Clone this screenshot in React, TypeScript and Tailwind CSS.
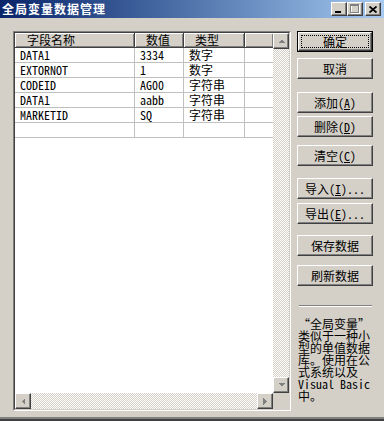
import React from "react";

const F = "font-['Noto_Sans_Mono_CJK_SC','Noto_Sans_CJK_SC',monospace]";

const BEVEL =
  "bg-[#d4d0c8] border border-t-white border-l-white border-b-[#404040] border-r-[#404040] shadow-[inset_-1px_-1px_#808080,inset_1px_1px_#d4d0c8]";

function Arrow({ dir }: { dir: "up" | "down" | "left" | "right" }) {
  const pts =
    dir === "up"
      ? "0,4 7,4 3.5,0.5"
      : dir === "down"
      ? "0,0 7,0 3.5,3.5"
      : dir === "left"
      ? "4,0 4,7 0.5,3.5"
      : "0,0 0,7 3.5,3.5";
  const w = dir === "up" || dir === "down" ? 7 : 4;
  const h = dir === "up" || dir === "down" ? 4 : 7;
  return (
    <svg width={w} height={h} viewBox={`0 0 ${w} ${h}`} shapeRendering="crispEdges">
      <polygon points={pts} fill="#808080" />
    </svg>
  );
}

function SBtn({ dir, className = "" }: { dir: "up" | "down" | "left" | "right"; className?: string }) {
  return (
    <div className={`${BEVEL} w-[16px] h-[16px] shrink-0 flex items-center justify-center ${className}`}>
      <Arrow dir={dir} />
    </div>
  );
}

const CHECK =
  "bg-[repeating-conic-gradient(#d4d0c8_0%_25%,#ffffff_0%_50%)] bg-size-[2px_2px]";

function Btn({
  children,
  mt = 0,
  isDefault = false,
}: {
  children: React.ReactNode;
  mt?: number;
  isDefault?: boolean;
}) {
  const label = (
    <span className="text-[12px] leading-[12px] text-black whitespace-nowrap">{children}</span>
  );
  if (isDefault) {
    return (
      <div className="w-[76px] h-[21px] border border-black shrink-0" style={{ marginTop: mt }}>
        <div className={`${BEVEL} w-full h-full relative flex items-center justify-center`}>
          <div className="absolute inset-[2px] border border-dotted border-black" />
          {label}
        </div>
      </div>
    );
  }
  return (
    <div
      className={`${BEVEL} w-[76px] h-[21px] shrink-0 flex items-center justify-center`}
      style={{ marginTop: mt }}
    >
      {label}
    </div>
  );
}

const rows: [string, string, string][] = [
  ["DATA1", "3334", "数字"],
  ["EXTORNOT", "1", "数字"],
  ["CODEID", "AG00", "字符串"],
  ["DATA1", "aabb", "字符串"],
  ["MARKETID", "SQ", "字符串"],
  ["", "", ""],
];

const HEAD =
  "h-[15px] shrink-0 bg-[#d4d0c8] border-r border-b border-r-[#404040] border-b-[#404040] shadow-[inset_1px_1px_#ffffff,inset_-1px_-1px_#808080] text-[12px] leading-[13px] text-black";

function CapBtn({ children, className = "" }: { children: React.ReactNode; className?: string }) {
  return (
    <div className={`${BEVEL} w-[16px] h-[14px] flex items-center justify-center ${className}`}>
      {children}
    </div>
  );
}

export default function App() {
  return (
    <div className={`w-[384px] h-[421px] flex flex-col bg-[#d4d0c8] overflow-hidden ${F} text-black`}>
      {/* Title bar */}
      <div className="h-[18px] shrink-0 flex items-center bg-linear-to-r from-[#0a246a] to-[#a6caf0]">
        <span className="pl-[2px] text-white text-[12px] font-bold tracking-[1px] leading-[18px] font-['Noto_Sans_CJK_SC',sans-serif]">
          全局变量数据管理
        </span>
        <div className="ml-auto flex items-center pr-[3px]">
          <CapBtn>
            <svg width="8" height="9" viewBox="0 0 8 9" shapeRendering="crispEdges" className="mt-[1px]">
              <rect x="0" y="6" width="6" height="2" fill="#000" />
            </svg>
          </CapBtn>
          <CapBtn>
            <svg width="10" height="10" viewBox="0 0 10 10" shapeRendering="crispEdges">
              <rect x="1.5" y="1.5" width="8" height="8" fill="none" stroke="#ffffff" />
              <rect x="1" y="1" width="8" height="1" fill="#ffffff" />
              <rect x="0.5" y="0.5" width="8" height="8" fill="none" stroke="#808080" />
              <rect x="0" y="0" width="9" height="2" fill="#808080" />
            </svg>
          </CapBtn>
          <CapBtn className="ml-[2px]">
            <svg width="8" height="7" viewBox="0 0 8 7">
              <path d="M0.5 0.5 L7.5 6.5 M7.5 0.5 L0.5 6.5" stroke="#000" strokeWidth="1.8" />
            </svg>
          </CapBtn>
        </div>
      </div>

      {/* Body */}
      <div className="flex-1 flex pl-[13px] pt-[13px] border-b-2 border-b-[#404040] shadow-[inset_0_-2px_#808080]">
        {/* Table frame */}
        <div className="w-[278px] h-[380px] shrink-0 border border-t-[#808080] border-l-[#808080] border-b-white border-r-white">
          <div className="w-full h-full border border-t-[#404040] border-l-[#404040] border-b-[#d4d0c8] border-r-[#d4d0c8] grid grid-cols-[258px_16px] grid-rows-[360px_16px]">
            {/* grid content */}
            <div className="bg-white flex flex-col overflow-hidden">
              <div className="flex shrink-0">
                <div className={`${HEAD} w-[120px] pl-[12px]`}>字段名称</div>
                <div className={`${HEAD} w-[49px] pl-[11px]`}>数值</div>
                <div className={`${HEAD} w-[61px] pl-[11px]`}>类型</div>
                <div className={`${HEAD} w-[28px] border-r-0`}></div>
              </div>
              {rows.map((r, i) => (
                <div key={i} className="flex h-[15px] shrink-0 border-b border-[#c0c0c0] text-[12px] leading-[14px] text-black">
                  <div className="w-[120px] pl-[5px] border-r border-[#c0c0c0]">{r[0]}</div>
                  <div className="w-[49px] pl-[5px] border-r border-[#c0c0c0]">{r[1]}</div>
                  <div className="w-[61px] pl-[5px] border-r border-[#c0c0c0]">{r[2]}</div>
                  <div className="w-[28px]"></div>
                </div>
              ))}
            </div>
            {/* vertical scrollbar */}
            <div className={`flex flex-col ${CHECK}`}>
              <SBtn dir="up" />
              <div className="flex-1" />
              <SBtn dir="down" />
            </div>
            {/* horizontal scrollbar */}
            <div className={`flex ${CHECK}`}>
              <SBtn dir="left" />
              <div className="flex-1" />
              <SBtn dir="right" />
            </div>
            <div className="bg-[#d4d0c8]" />
          </div>
        </div>

        {/* Right column */}
        <div className="ml-[6px] w-[76px] flex flex-col">
          <Btn isDefault>确定</Btn>
          <Btn mt={6}>取消</Btn>
          <Btn mt={13}>
            添加(<u>A</u>)
          </Btn>
          <Btn mt={3}>
            删除(<u>D</u>)
          </Btn>
          <Btn mt={8}>
            清空(<u>C</u>)
          </Btn>
          <Btn mt={12}>
            导入(<u>I</u>)...
          </Btn>
          <Btn mt={4}>
            导出(<u>E</u>)...
          </Btn>
          <Btn mt={11}>保存数据</Btn>
          <Btn mt={9}>刷新数据</Btn>
          <div className="mt-[19px] ml-[2px] w-[73px] h-[2px] border-t border-t-[#808080] border-b border-b-white" />
          <div className="mt-[11px] ml-[1px] text-[12px] leading-[12px] text-black whitespace-nowrap">
            <div>“全局变量”</div>
            <div>类似于一种小</div>
            <div>型的单值数据</div>
            <div>库。使用在公</div>
            <div>式系统以及</div>
            <div>Visual Basic</div>
            <div>中。</div>
          </div>
        </div>
      </div>
    </div>
  );
}
